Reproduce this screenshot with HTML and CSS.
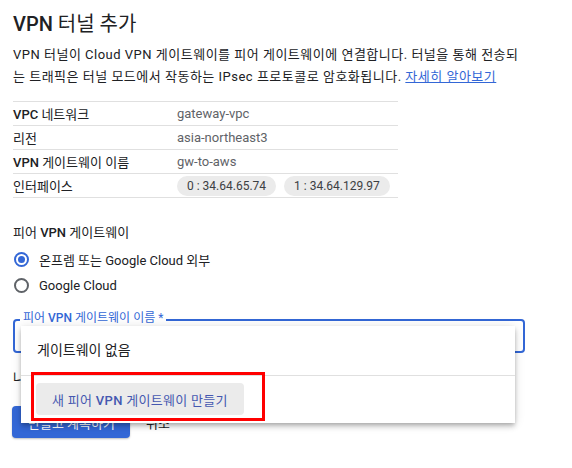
FILE: index.html
```html
<!DOCTYPE html>
<html lang="ko">
<head>
  <meta charset="UTF-8" />
  <meta name="viewport" content="width=device-width, initial-scale=1" />
  <title>VPN 터널 추가</title>
  <link rel="stylesheet" href="styles.css">
</head>
<body>
<div class="page">

  <h1><span class="m">VPN</span> 터널 추가</h1>
  <p class="intro">VPN 터널이 Cloud VPN 게이트웨이를 피어 게이트웨이에 연결합니다. 터널을 통해 전송되는 트래픽은 터널 모드에서 작동하는 IPsec 프로토콜로 암호화됩니다. <a href="#">자세히 알아보기</a></p>

  <!-- Selected gateway summary -->
  <div class="summary">
    <div class="row"><div class="key"><span class="m">VPC</span> 네트워크</div><div class="val">gateway-vpc</div></div>
    <div class="row"><div class="key">리전</div><div class="val">asia-northeast3</div></div>
    <div class="row"><div class="key"><span class="m">VPN</span> 게이트웨이 이름</div><div class="val">gw-to-aws</div></div>
    <div class="row">
      <div class="key">인터페이스</div>
      <div class="val">
        <span class="chip">0 : 34.64.65.74</span>
        <span class="chip">1 : 34.64.129.97</span>
      </div>
    </div>
  </div>

  <div class="section-label">피어 <span class="m">VPN</span> 게이트웨이</div>
  <label class="radio"><span class="circle checked"></span>온프렘 또는 Google Cloud 외부</label>
  <label class="radio"><span class="circle"></span>Google Cloud</label>

  <div class="field">
    <span class="field-label">피어 <span class="m">VPN</span> 게이트웨이 이름 *</span>

    <!-- open dropdown -->
    <div class="menu">
      <div class="menu-item">게이트웨이 없음</div>
      <div class="menu-footer">
        <button class="create">새 피어 <span class="m">VPN</span> 게이트웨이 만들기</button>
      </div>
      <div class="highlight"></div>
    </div>
  </div>

  <div class="hint">나중에 피어 VPN 게이트웨이를 추가할 수 있습니다.</div>

  <div class="actions">
    <button class="primary">만들고 계속하기</button>
    <button class="plain">취소</button>
  </div>

</div>
</body>
</html>
```

FILE: styles.css
```css
html, body {
  margin: 0;
  padding: 0;
  background: #fff;
}

body {
  font-family: Roboto, "Noto Sans CJK KR", sans-serif;
  color: #202124;
  font-size: 13px;
}

.page {
  width: 512px;
  padding: 10px 13px;
}

/* Latin words in medium weight, Hangul stays regular */
.m {
  font-weight: 500;
}

h1 {
  font-size: 20px;
  font-weight: 400;
  line-height: 28px;
  margin: 0;
}

.intro {
  margin: 6px 0 0;
  line-height: 22px;
  letter-spacing: 0.5px;
}
.intro a {
  color: #3367d6;
}

/* summary table */
.summary {
  width: 385px;
  margin-top: 13px;
  border-bottom: 1px solid #e0e0e0;
}
.row {
  display: flex;
  align-items: center;
  height: 23px;
  border-top: 1px solid #e0e0e0;
}
.key {
  width: 164px;
  flex: none;
}
.val {
  color: #5f6368;
  display: flex;
  gap: 8px;
  white-space: nowrap;
}
.chip {
  flex: none;
  background: #ebebeb;
  color: #3c4043;
  border-radius: 10px;
  height: 20px;
  line-height: 20px;
  font-size: 12px;
  padding: 0 10px;
}

.section-label {
  margin-top: 25px;
  line-height: 20px;
}

.radio {
  display: flex;
  align-items: center;
  height: 26px;
  gap: 10px;
}
.radio:first-of-type {
  margin-top: 3px;
}
.circle {
  width: 11px;
  height: 11px;
  border: 2px solid #5f6368;
  border-radius: 50%;
  margin-left: 1px;
  position: relative;
}
.circle.checked {
  border-color: #3367d6;
}
.circle.checked::after {
  content: "";
  position: absolute;
  left: 2px;
  top: 2px;
  width: 7px;
  height: 7px;
  border-radius: 50%;
  background: #3367d6;
}

/* outlined select with its menu open */
.field {
  position: relative;
  margin-top: 21px;
  height: 30px;
  border: 2px solid #3367d6;
  border-radius: 4px;
}
.field-label {
  position: absolute;
  left: 5px;
  top: -10px;
  padding: 0 3px;
  background: #fff;
  color: #3367d6;
  font-size: 12px;
  line-height: 14px;
}

.menu {
  position: absolute;
  left: 6px;
  top: 5px;
  width: 494px;
  background: #fff;
  z-index: 2;
  box-shadow: 0 2px 4px -1px rgba(0, 0, 0, 0.2), 0 4px 5px 0 rgba(0, 0, 0, 0.14), 0 1px 10px 0 rgba(0, 0, 0, 0.12);
}
.menu-item {
  height: 49px;
  line-height: 49px;
  padding-left: 16px;
  font-size: 14px;
  border-bottom: 1px solid #e0e0e0;
}
.menu-footer {
  padding: 7px 15px 8px;
}
.create {
  font-family: inherit;
  font-size: 13px;
  letter-spacing: 0.3px;
  color: #4558b0;
  background: #ebebeb;
  border: none;
  border-radius: 4px;
  height: 32px;
  padding: 0 16px;
}
/* red annotation box */
.highlight {
  position: absolute;
  left: 10px;
  top: 46px;
  width: 234px;
  height: 49px;
  box-sizing: border-box;
  border: 3px solid #f00;
}

.hint {
  margin-top: 15px;
  line-height: 20px;
}

.actions {
  margin-top: 18px;
  margin-left: -1px;
  display: flex;
  align-items: center;
  gap: 0;
}
.actions button {
  font-family: inherit;
  font-size: 13px;
  border: none;
  border-radius: 4px;
  height: 32px;
  padding: 0 16px;
  white-space: nowrap;
}
.primary {
  background: #3367d6;
  color: #fff;
  width: 118px;
  overflow: hidden;
  box-shadow: 0 1px 2px rgba(0, 0, 0, 0.25);
}
.plain {
  background: none;
  color: #202124;
}
```
